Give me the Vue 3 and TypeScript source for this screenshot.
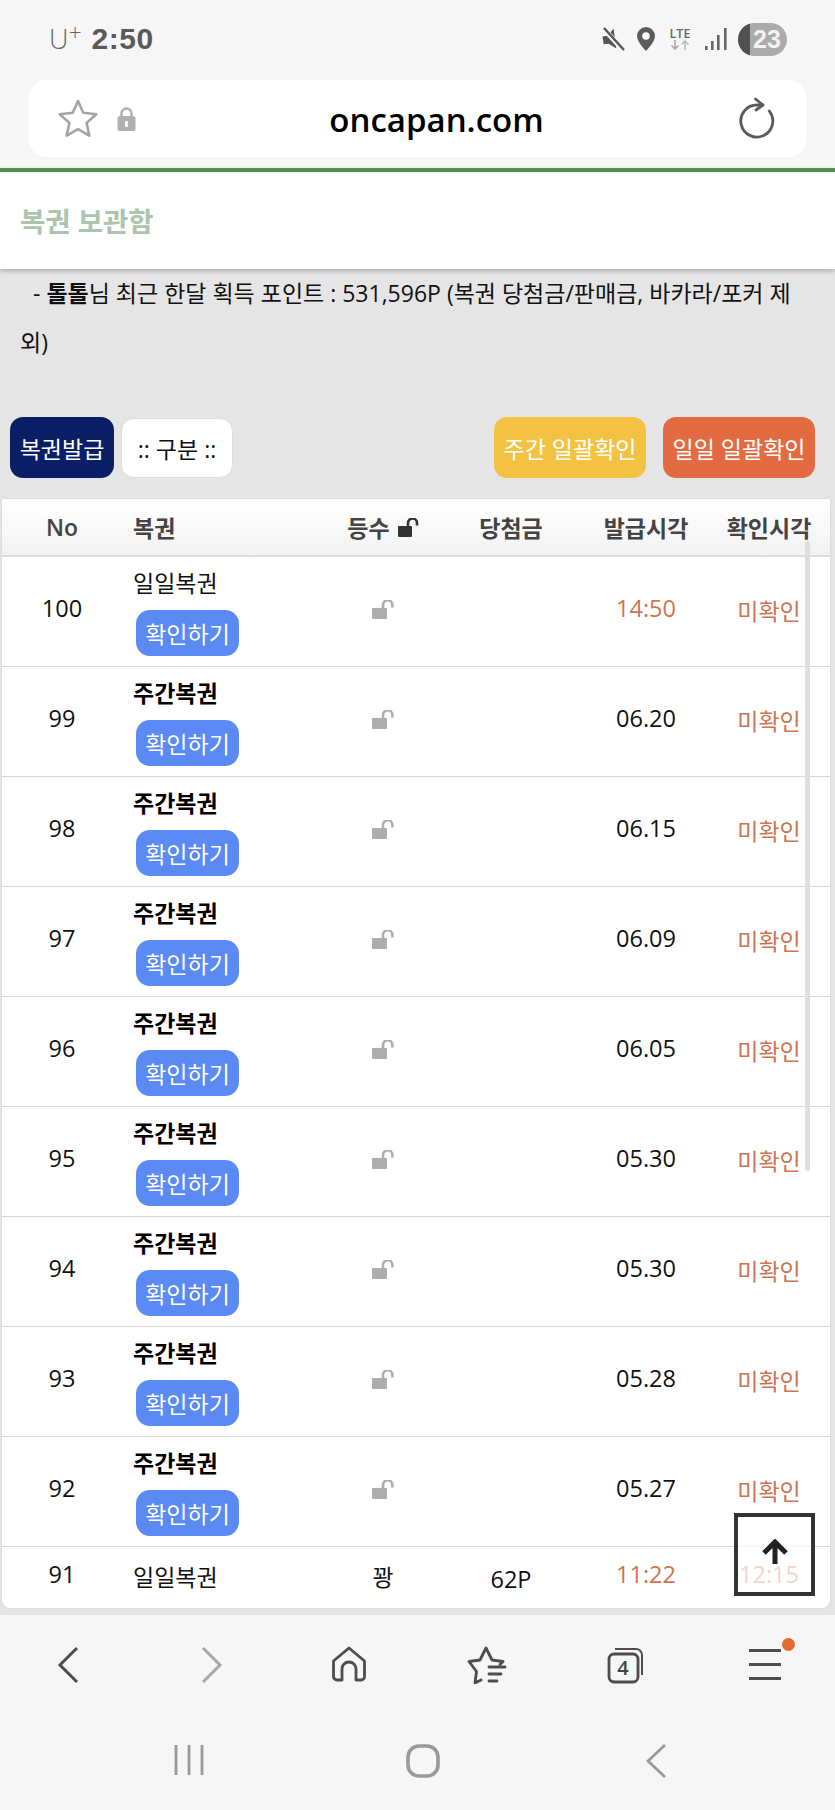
<script setup lang="ts">
interface Row {
  no: number
  name: string
  weekly: boolean
  time: string
  today: boolean
}

const rows: Row[] = [
  { no: 100, name: '일일복권', weekly: false, time: '14:50', today: true },
  { no: 99, name: '주간복권', weekly: true, time: '06.20', today: false },
  { no: 98, name: '주간복권', weekly: true, time: '06.15', today: false },
  { no: 97, name: '주간복권', weekly: true, time: '06.09', today: false },
  { no: 96, name: '주간복권', weekly: true, time: '06.05', today: false },
  { no: 95, name: '주간복권', weekly: true, time: '05.30', today: false },
  { no: 94, name: '주간복권', weekly: true, time: '05.30', today: false },
  { no: 93, name: '주간복권', weekly: true, time: '05.28', today: false },
  { no: 92, name: '주간복권', weekly: true, time: '05.27', today: false },
]
</script>

<template>
  <div class="page">
    <header class="status">
      <div class="status-left">
        <span class="carrier">U<sup>+</sup></span>
        <span class="clock">2:50</span>
      </div>
      <div class="status-right">
        <svg width="24" height="24" viewBox="0 0 24 24">
          <path d="M2 8h5l7-6v20l-7-6H2z" fill="#555" transform="rotate(-8 12 12)" />
          <path d="M3 2l19 21" stroke="#f5f5f5" stroke-width="5" />
          <path d="M3 1l20 22" stroke="#555" stroke-width="2.4" />
        </svg>
        <svg width="18" height="24" viewBox="0 0 18 24">
          <path fill-rule="evenodd" d="M9 0a9 9 0 0 1 9 9c0 6-9 15-9 15S0 15 0 9a9 9 0 0 1 9-9zm0 5.2a3.8 3.8 0 1 0 0 7.6 3.8 3.8 0 0 0 0-7.6z" fill="#5c5c5c" />
        </svg>
        <div class="lte">
          <span>LTE</span>
          <svg width="20" height="10" viewBox="0 0 20 10">
            <path d="M5 0v9M1.5 5.5L5 9l3.500-3.500" stroke="#aaa" stroke-width="1.6" fill="none" />
            <path d="M15 10V1M11.500 4.500L15 1l3.500 3.500" stroke="#bbb" stroke-width="1.6" fill="none" />
          </svg>
        </div>
        <svg width="22" height="22" viewBox="0 0 22 22">
          <rect x="0" y="18" width="2.600" height="4" fill="#666" />
          <rect x="6" y="13" width="2.600" height="9" fill="#666" />
          <rect x="12" y="7" width="2.600" height="15" fill="#666" />
          <rect x="19" y="0" width="2.600" height="22" fill="#666" />
        </svg>
        <div class="battery"><i></i><span>23</span></div>
      </div>
    </header>

    <div class="address">
      <svg class="addr-star" width="40" height="38" viewBox="0 0 40 38">
        <path d="M20 2l5.300 11.800 13 1.400-9.700 8.700 2.700 12.700L20 30.200 8.700 36.600l2.700-12.700-9.700-8.700 13-1.400z" fill="none" stroke="#a3a3a3" stroke-width="2.600" stroke-linejoin="round" />
      </svg>
      <svg class="addr-lock" width="19" height="24" viewBox="0 0 19 24">
        <path d="M4.500 10V6.500a5 5 0 0 1 10 0V10" fill="none" stroke="#b0b0b0" stroke-width="2.400" />
        <rect x="0.500" y="9" width="18" height="15" rx="2.500" fill="#b0b0b0" />
        <rect x="8" y="14" width="3" height="6" rx="1" fill="#fff" />
      </svg>
      <span class="url">oncapan.com</span>
      <svg class="addr-reload" width="36" height="42" viewBox="0 0 36 42">
        <path d="M30.300 14A16 16 0 1 1 18 8h6" fill="none" stroke="#5a5a5a" stroke-width="2.800" stroke-linecap="round" />
        <path d="M16.500 2L24 8l-7 5" fill="none" stroke="#5a5a5a" stroke-width="2.800" stroke-linecap="round" stroke-linejoin="round" />
      </svg>
    </div>

    <div class="title-bar">
      <h1>복권 보관함</h1>
    </div>

    <main class="content">
      <p class="info">- <b>톨톨</b>님 최근 한달 획득 포인트 : 531,596P (복권 당첨금/판매금, 바카라/포커 제<br />외)</p>

      <div class="actions">
        <div class="actions-left">
          <button class="btn navy">복권발급</button>
          <button class="btn plain">:: 구분 ::</button>
        </div>
        <div class="actions-right">
          <button class="btn yellow">주간 일괄확인</button>
          <button class="btn orange">일일 일괄확인</button>
        </div>
      </div>

      <section class="table">
        <div class="row head">
          <div>No</div>
          <div class="left">복권</div>
          <div class="rank-head">
            등수
            <svg width="21" height="19" viewBox="0 0 21 19">
              <rect x="0" y="8" width="14" height="11" rx="1" fill="#333" />
              <path d="M10 9V5a4.500 4.500 0 0 1 9 0v2.500" fill="none" stroke="#333" stroke-width="2.600" />
            </svg>
          </div>
          <div>당첨금</div>
          <div>발급시각</div>
          <div>확인시각</div>
        </div>

        <div v-for="r in rows" :key="r.no" class="row item">
          <div class="lift num">{{ r.no }}</div>
          <div class="ticket">
            <span :class="{ strong: r.weekly }">{{ r.name }}</span>
            <button class="check">확인하기</button>
          </div>
          <div class="lock">
            <svg width="22" height="19" viewBox="0 0 22 19">
              <rect x="0" y="8" width="15" height="11" rx="1" fill="#adadad" />
              <path d="M11 9V5a4.700 4.700 0 0 1 9.400 0v2.500" fill="none" stroke="#adadad" stroke-width="2.600" />
            </svg>
          </div>
          <div></div>
          <div class="lift num" :class="{ orange: r.today }">{{ r.time }}</div>
          <div class="orange state">미확인</div>
        </div>

        <div class="row last">
          <div class="up3 num">91</div>
          <div class="left">일일복권</div>
          <div>꽝</div>
          <div class="down2 num">62P</div>
          <div class="up3 orange num">11:22</div>
          <div class="up3 orange num">12:15</div>
        </div>

        <div class="thumb"></div>
      </section>
    </main>

    <footer class="toolbar">
      <svg width="22" height="38" viewBox="0 0 22 38"><path d="M20 2L3 19l17 17" class="ico" /></svg>
      <svg width="22" height="38" viewBox="0 0 22 38"><path d="M2 2l17 17L2 36" class="ico dim" /></svg>
      <svg width="36" height="36" viewBox="0 0 36 36">
        <path d="M11 34H6a3.500 3.500 0 0 1-3.500-3.500V15L18 2l15.500 13v15.500A3.500 3.500 0 0 1 30 34h-5V23a7 7 0 0 0-14 0z" class="ico thin" />
      </svg>
      <svg width="40" height="38" viewBox="0 0 40 38">
        <path d="M14 34l-6 3 1.500-11.500L2 15.500l11-1.500L19 2l6 12 11 1.500-3 3" class="ico thin" />
        <path d="M22 21h16M22 28h12M22 35h8" class="ico thin" />
      </svg>
      <div class="tabs">
        <span>4</span>
        <svg width="38" height="38" viewBox="0 0 38 38">
          <rect x="2" y="8" width="29" height="28" rx="5" class="ico thin" />
          <path d="M8 3h21a6 6 0 0 1 6 6v20" class="ico hair" />
        </svg>
      </div>
      <div class="menu">
        <i></i><i></i><i></i>
        <b class="dot"></b>
      </div>
    </footer>

    <nav class="system">
      <svg width="30" height="32" viewBox="0 0 30 32"><path d="M2 1v30M15 1v30M28 1v30" class="nav" /></svg>
      <svg width="34" height="34" viewBox="0 0 34 34"><rect x="2" y="2" width="30" height="30" rx="11" class="nav wide" /></svg>
      <svg width="22" height="34" viewBox="0 0 22 34"><path d="M20 1L3 17l17 16" class="nav" /></svg>
    </nav>

    <button class="to-top" aria-label="top">
      <svg width="28" height="26" viewBox="0 0 28 26">
        <path d="M14 25V4M3 14L14 3l11 11" fill="none" stroke="#222" stroke-width="5" />
      </svg>
    </button>
  </div>
</template>

<style>
html,
body {
  margin: 0;
  background: #f6f6f6;
}
</style>

<style scoped>
.page {
  position: relative;
  width: 835px;
  height: 1810px;
  overflow: hidden;
  background: #f6f6f6;
  font-family: "Open Sans", "Noto Sans CJK KR", sans-serif;
  color: #111;
  display: flex;
  flex-direction: column;
}
.status {
  height: 80px;
  box-sizing: border-box;
  display: flex;
  justify-content: space-between;
  align-items: center;
  padding: 2px 48px 4px 49px;
  color: #5a5a5a;
}
.status-left {
  display: flex;
  align-items: center;
  gap: 10px;
}
.carrier {
  font-size: 27px;
  line-height: 34px;
  font-weight: 300;
  color: #666;
}
.carrier sup {
  font-size: 23px;
  line-height: 0;
  vertical-align: 8px;
}
.clock {
  font-family: "Liberation Sans", sans-serif;
  font-size: 30px;
  font-weight: 700;
  line-height: 34px;
  letter-spacing: 0.5px;
}
.status-right {
  display: flex;
  align-items: center;
  gap: 12px;
}
.lte {
  display: flex;
  flex-direction: column;
  align-items: center;
  width: 26px;
  height: 24px;
  font-size: 12.5px;
  line-height: 13px;
  font-weight: 600;
  color: #666;
}
.lte svg {
  display: block;
}
.battery {
  position: relative;
  width: 49px;
  height: 33px;
  border-radius: 17px;
  background: #ababab;
  overflow: hidden;
  margin-left: -1px;
}
.battery i {
  position: absolute;
  left: 0;
  top: 0;
  bottom: 0;
  width: 12px;
  background: #505050;
}
.battery span {
  position: absolute;
  left: 11px;
  top: 0;
  width: 36px;
  text-align: center;
  font-size: 25px;
  line-height: 33px;
  font-weight: 700;
  color: #f2f2f2;
  font-family: "Liberation Sans", sans-serif;
}
.address {
  position: relative;
  height: 77px;
  margin: 0 29px 11px;
  background: #fff;
  border-radius: 18px;
  display: flex;
  align-items: center;
  justify-content: center;
}
.addr-star {
  position: absolute;
  left: 29px;
  top: 19px;
}
.addr-lock {
  position: absolute;
  left: 88px;
  top: 27px;
}
.addr-reload {
  position: absolute;
  right: 31px;
  top: 17px;
}
.url {
  font-size: 33px;
  font-weight: 600;
  color: #000;
  margin-left: 38px;
  margin-top: 2px;
}
.title-bar {
  position: relative;
  z-index: 1;
  height: 97px;
  background: #fff;
  border-top: 4px solid #4e8f56;
  box-shadow: 0 2px 5px rgba(0, 0, 0, 0.25);
  display: flex;
  align-items: center;
  padding-left: 20px;
}
.title-bar h1 {
  margin: 2px 0 0;
  font-size: 27.5px;
  line-height: 34px;
  font-weight: 700;
  color: #abc4ab;
}
.content {
  height: 1346px;
  background: #e5e5e5;
}
.info {
  margin: 0;
  padding: 0 18px 0 20px;
  height: 148px;
  font-size: 23px;
  line-height: 49px;
  color: #111;
  text-indent: 13px;
}
.info b {
  font-weight: 700;
}
.actions {
  display: flex;
  justify-content: space-between;
  padding: 0 20px 0 10px;
}
.actions-left,
.actions-right {
  display: flex;
  align-items: center;
}
.actions-left {
  gap: 7px;
}
.actions-right {
  gap: 17px;
}
.btn {
  height: 61px;
  border: 0;
  padding: 0;
  border-radius: 13px;
  font-family: inherit;
  font-size: 23px;
  color: #fff;
}
.navy {
  width: 104px;
  background: #0a1f66;
}
.plain {
  width: 112px;
  height: 60px;
  background: #fff;
  color: #111;
  border: 1px solid #ddd;
  box-sizing: border-box;
}
.yellow {
  width: 152px;
  background: #f3c242;
}
.btn.orange {
  width: 152px;
  background: #e36b42;
  color: #fff;
}
.table {
  position: relative;
  margin: 21px 5px 0 2px;
  background: #fff;
  border-radius: 0 0 8px 8px;
  box-shadow: 0 0 2px rgba(0, 0, 0, 0.12);
}
.row {
  display: grid;
  grid-template-columns: 120px 206px 110px 146px 124px 122px;
  align-items: center;
  text-align: center;
  font-size: 23px;
}
.num {
  font-size: 23.5px;
}
.head {
  height: 58px;
  box-sizing: border-box;
  border-bottom: 2px solid #dcdcdc;
  background: linear-gradient(#ffffff, #f2f2f2);
  font-weight: 600;
  color: #444;
}
.left {
  text-align: left;
  padding-left: 11px;
}
.rank-head {
  display: flex;
  align-items: center;
  justify-content: center;
  gap: 8px;
}
.item {
  height: 110px;
  box-sizing: border-box;
  border-bottom: 1px solid #d8d8d8;
}
.lift {
  padding-bottom: 7px;
}
.lock {
  display: flex;
  justify-content: center;
  padding-bottom: 4px;
}
.state {
  padding-bottom: 3px;
}
.ticket {
  display: flex;
  flex-direction: column;
  align-items: flex-start;
  gap: 14px;
  padding: 13px 0 0 11px;
  height: 100%;
  box-sizing: border-box;
  line-height: 26px;
}
.strong {
  font-weight: 700;
  color: #000;
}
.check {
  width: 103px;
  height: 46px;
  margin-left: 3px;
  border: 0;
  padding: 0;
  border-radius: 14px;
  background: #5b8af5;
  color: #fff;
  font-family: inherit;
  font-size: 23px;
}
.orange {
  color: #cf7350;
}
.last {
  height: 61px;
}
.up3 {
  padding-bottom: 8px;
}
.down2 {
  padding-top: 2px;
}
.last > div:nth-child(2),
.last > div:nth-child(3) {
  padding-bottom: 3px;
}
.thumb {
  position: absolute;
  left: 803px;
  top: 42px;
  width: 5px;
  height: 630px;
  background: #dedede;
  border-radius: 3px;
}
.toolbar {
  height: 129px;
  display: grid;
  grid-template-columns: 136px 152px 121px 155px 123px 148px;
  justify-items: center;
  align-items: start;
  padding: 31px 0 0 0;
  box-sizing: border-box;
}
.ico {
  fill: none;
  stroke: #4d4d4d;
  stroke-width: 3;
}
.ico.thin {
  stroke-width: 2.8;
  stroke-linejoin: round;
  stroke-linecap: round;
}
.ico.hair {
  stroke-width: 2;
}
.ico.dim {
  stroke: #a8a8a8;
}
.tabs {
  position: relative;
  width: 38px;
  height: 38px;
}
.tabs span {
  position: absolute;
  left: 2px;
  top: 8px;
  width: 29px;
  text-align: center;
  font-size: 20px;
  line-height: 28px;
  font-weight: 600;
  color: #444;
}
.menu {
  position: relative;
  width: 32px;
  display: flex;
  flex-direction: column;
  gap: 11px;
  padding-top: 3px;
  margin-left: 8px;
}
.menu i {
  display: block;
  height: 3px;
  background: #4d4d4d;
}
.dot {
  position: absolute;
  right: -14px;
  top: -8px;
  width: 13px;
  height: 13px;
  border-radius: 50%;
  background: #e36b32;
}
.system {
  height: 66px;
  display: grid;
  grid-template-columns: 290px 178px 288px;
  justify-items: center;
  align-items: start;
  padding-left: 44px;
  box-sizing: border-box;
}
.nav {
  fill: none;
  stroke: #9a9a9a;
  stroke-width: 2.800;
}
.nav.wide {
  stroke-width: 3.600;
}
.to-top {
  position: absolute;
  left: 734px;
  top: 1513px;
  width: 81px;
  height: 83px;
  box-sizing: border-box;
  border: 4px solid #333;
  background: rgba(255, 255, 255, 0.7);
  padding: 22px 0 0;
  display: flex;
  justify-content: center;
  align-items: flex-start;
}
</style>
